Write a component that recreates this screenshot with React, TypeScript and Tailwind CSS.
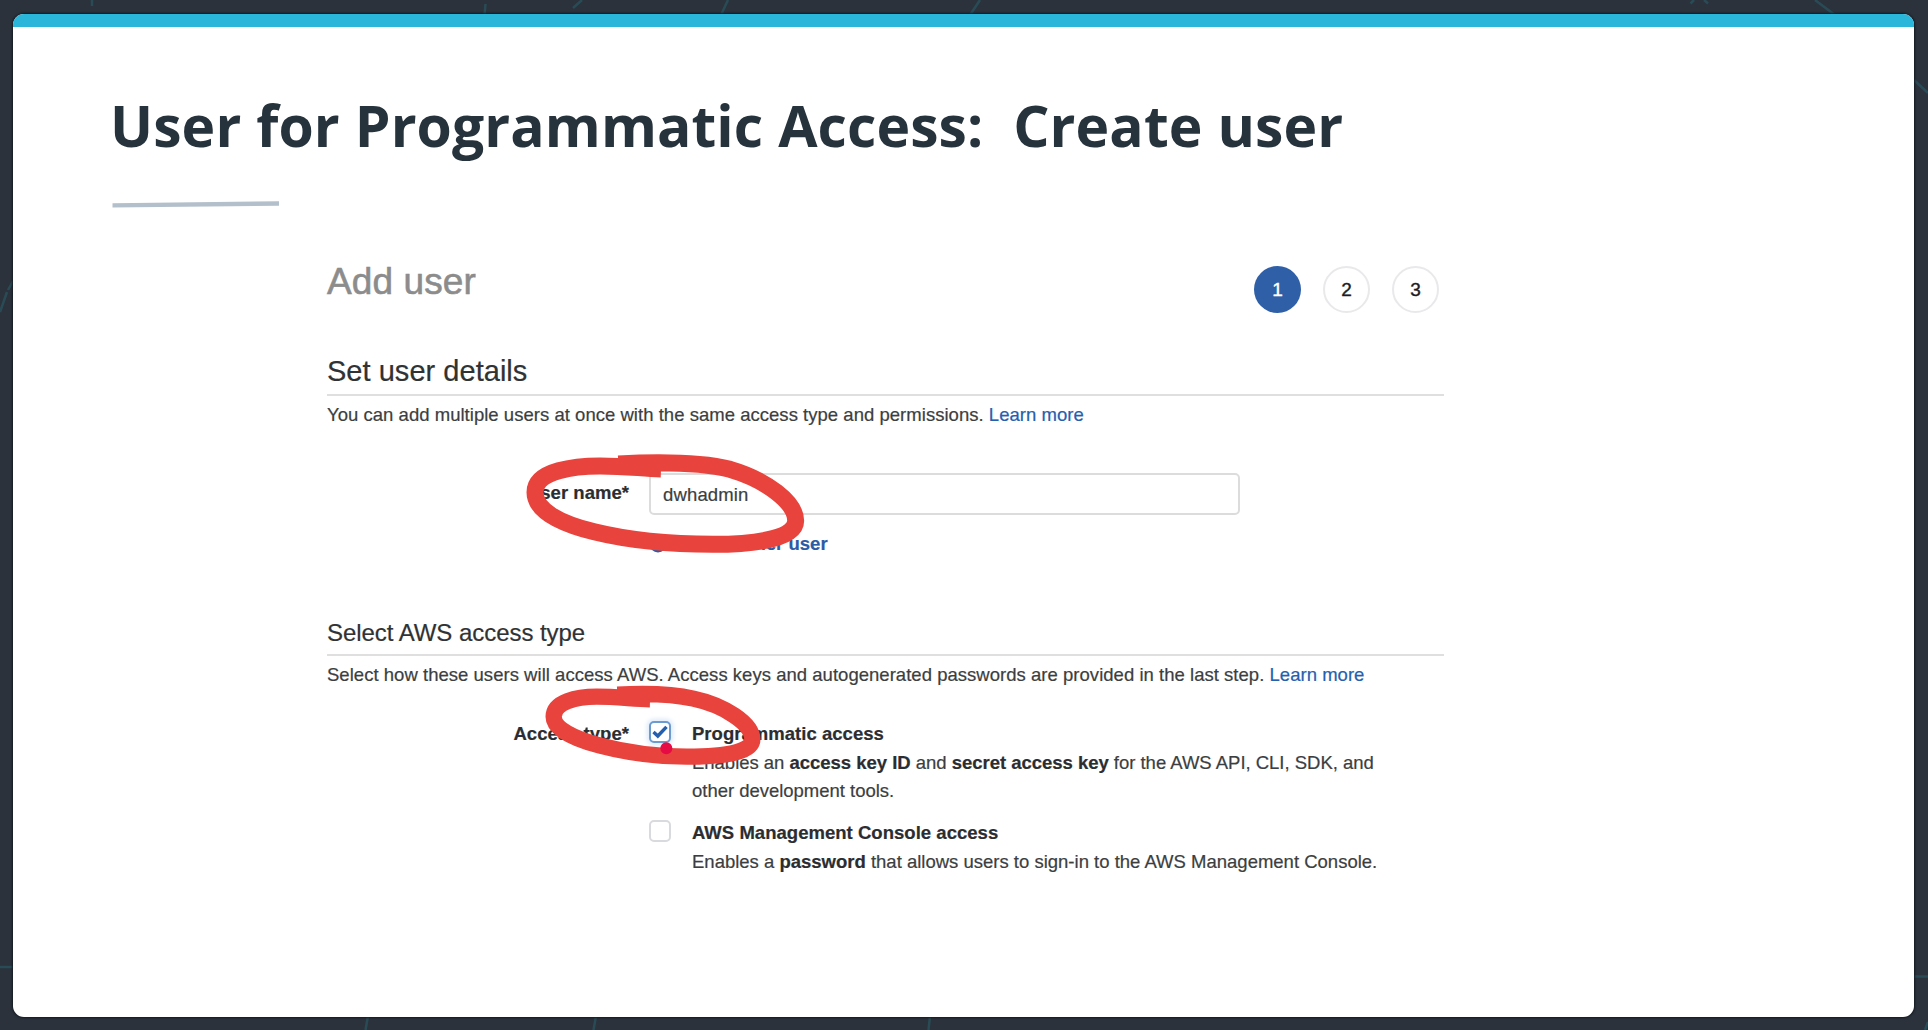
import type { ReactNode } from 'react';

function Backdrop() {
  return (
    <svg
      className="absolute inset-0 h-full w-full"
      viewBox="0 0 1928 1030"
      fill="none"
      stroke="#28545f"
      strokeWidth="2.5"
      strokeOpacity="0.75"
    >
      <path d="M92 0V6M485.500 4L484.500 15M582 0L573 8M728 0L721 15M980 0L970 15" />
      <path d="M1690.500 3.500L1694 0M1708 3.500L1704 0M1815 0L1835 15M1914 80L1928 93" />
      <path d="M0 967H14M1914 976.500H1928M1928 1022L1925 1030" />
      <path d="M368 1016L365.500 1030M596 1016L593.500 1030M930 1016L928.500 1030" />
      <path d="M13 281L8 290M7 292L0 312" />
    </svg>
  );
}

function Section({ title, titleClass, children }: { title: string; titleClass: string; children: ReactNode }) {
  return (
    <section>
      <h3 className={`border-b-2 border-[#dfdfdf] pb-[5px] text-[#303234] ${titleClass}`}>{title}</h3>
      <p className="mt-[5px] whitespace-pre leading-7">{children}</p>
    </section>
  );
}

function LearnMore() {
  return <a className="text-[#2560ae] [-webkit-text-stroke:0.2px_#2560ae]">Learn more</a>;
}

function Step({ n, active }: { n: number; active?: boolean }) {
  return (
    <div
      className={`flex h-[47px] w-[47px] items-center justify-center rounded-full pt-px text-[19px] ${
        active
          ? 'bg-[#2f5fa6] text-white [-webkit-text-stroke:0.4px_white]'
          : 'border-2 border-[#e9e9ec] text-[#1d1d1f] [-webkit-text-stroke:0.4px_#1d1d1f]'
      }`}
    >
      {n}
    </div>
  );
}

function Checkbox({ checked }: { checked?: boolean }) {
  return (
    <div
      className={`mt-px flex h-[22px] w-[22px] shrink-0 items-center justify-center rounded-[5px] border-2 bg-white ${
        checked ? 'border-[#6c9bd2] shadow-[0_0_5px_2px_#dce9f8]' : 'border-[#d9dadd]'
      }`}
    >
      {checked && (
        <svg width="16" height="14" viewBox="0 0 16 14" fill="none" stroke="#2560ae" strokeWidth="3.400">
          <path d="M1.500 7L5.800 11L14.500 1.800" />
        </svg>
      )}
    </div>
  );
}

export default function App() {
  return (
    <div className="relative h-[1030px] w-[1928px] overflow-hidden bg-[#2b323c] pl-[13px] pt-[14px]">
      <Backdrop />
      <main className="relative h-[1003px] w-[1901px] overflow-hidden rounded-[11px] bg-white shadow-[0_0_2px_1px_#141a22]">
        <div className="h-[13px] bg-[#29b6da]" />
        <h1 className="ml-[97px] mt-[58px] h-20 whitespace-pre font-['Open_Sans',sans-serif] text-[57px] font-bold leading-[80px] tracking-[0.1px] text-[#26333c]">
          {'User for Programmatic Access:  Create user'}
        </h1>
        <svg className="ml-[99px] mt-[35px] block" width="168" height="8" viewBox="0 0 168 8">
          <path d="M0.500 5.300L167 3.500" stroke="#b3bfca" strokeWidth="4.300" />
        </svg>

        <div className="ml-[314px] mt-[52px] w-[1117px] font-['Liberation_Sans',sans-serif] text-[18.5px] tracking-[0.03px] text-[#3c3e40] [-webkit-text-stroke:0.2px]">
          <header className="flex h-[60px] items-start justify-between">
            <h2 className="mt-px text-[37px] leading-[42px] tracking-[0.1px] text-[#8c8c8c] [-webkit-text-stroke:0.6px_#8c8c8c]">
              Add user
            </h2>
            <div className="mr-[5px] mt-[6px] flex gap-[22px]">
              <Step n={1} active />
              <Step n={2} />
              <Step n={3} />
            </div>
          </header>

          <div className="mt-[33px]">
            <Section title="Set user details" titleClass="text-[29px] leading-9">
              You can add multiple users at once with the same access type and permissions. <LearnMore />
            </Section>
          </div>

          <div className="mt-[43px] flex gap-5">
            <label className="h-[42px] w-[302px] text-right font-bold leading-[41px] text-[#2b2d30]">User name*</label>
            <div>
              <div className="mt-px h-[42px] w-[591px] rounded-[5px] border-2 border-[#dcdcdc] pl-3 leading-[39px] tracking-[0.15px]">
                dwhadmin
              </div>
              <a className="mt-[15px] flex h-7 items-center font-bold text-[#2b5ca6]">
                <svg className="mr-[7px]" width="18" height="18" viewBox="0 0 18 18">
                  <circle cx="9" cy="9" r="8.500" fill="#2b5ca6" />
                  <path d="M9 4.500V13.500M4.500 9H13.500" stroke="white" strokeWidth="2.200" />
                </svg>
                Add another user
              </a>
            </div>
          </div>

          <div className="mt-[59px]">
            <Section title="Select AWS access type" titleClass="text-[24px] leading-8 tracking-[-0.05px]">
              Select how these users will access AWS. Access keys and autogenerated passwords are provided in the last step.{' '}
              <LearnMore />
            </Section>
          </div>

          <div className="mt-[31px] flex">
            <div className="mr-5 w-[302px] text-right font-bold leading-7 text-[#2b2d30]">Access type*</div>
            <div className="flex flex-col gap-[15px] [&_b]:text-[#2b2d30]">
              <div className="flex gap-[21px]">
                <Checkbox checked />
                <div className="leading-7">
                  <b>Programmatic access</b>
                  <p className="mt-px whitespace-nowrap leading-[27.5px] tracking-[-0.02px]">
                    Enables an <b>access key ID</b> and <b>secret access key</b> for the AWS API, CLI, SDK, and
                    <br />
                    other development tools.
                  </p>
                </div>
              </div>
              <div className="flex gap-[21px]">
                <Checkbox />
                <div className="leading-7">
                  <b>AWS Management Console access</b>
                  <p className="mt-px whitespace-nowrap leading-[27.5px] tracking-[0px]">
                    Enables a <b>password</b> that allows users to sign-in to the AWS Management Console.
                  </p>
                </div>
              </div>
            </div>
          </div>
        </div>
      </main>

      {/* Marker strokes drawn over the form */}
      <svg
        className="absolute left-[500px] top-[430px]"
        width="420"
        height="140"
        viewBox="0 0 1260 420"
        fill="none"
        stroke="#e8433d"
        strokeWidth="51"
      >
        <path d="M355 102C470 96 600 96 690 118C800 150 887 218 887 272C887 320 790 343 640 343C400 343 105 295 105 187C105 120 230 108 300 108C380 108 420 115 483 117" />
      </svg>
      <svg
        className="absolute left-[500px] top-[670px]"
        width="420"
        height="140"
        viewBox="0 0 1260 420"
        fill="none"
        stroke="#e8433d"
        strokeWidth="49"
      >
        <path d="M352 74C430 70 520 72 580 86C670 105 757 160 757 208C757 243 690 260 560 260C400 260 161 212 161 140C161 95 230 80 290 80C350 80 400 87 450 88" />
        <circle cx="499" cy="235" r="18" fill="#e60b45" stroke="none" />
      </svg>
    </div>
  );
}
